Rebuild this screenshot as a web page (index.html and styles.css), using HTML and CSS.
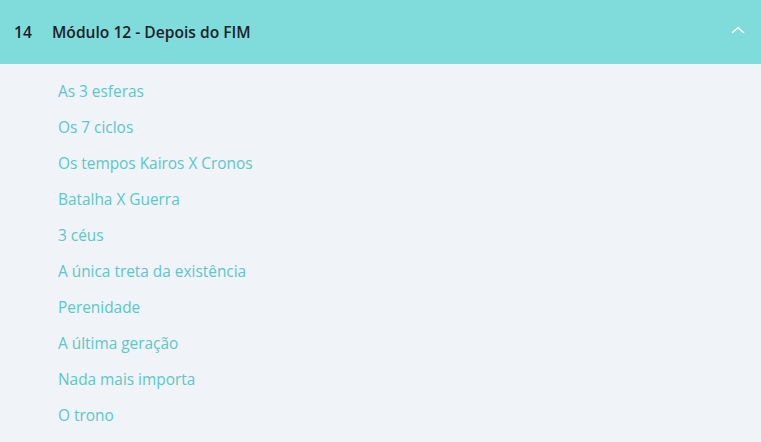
FILE: index.html
```html
<!DOCTYPE html>
<html lang="pt">
<head>
    <meta charset="UTF-8">
    <meta name="viewport" content="width=device-width, initial-scale=1.0">
    <title>Módulo 12 - Depois do FIM</title>
    <link rel="stylesheet" href="styles.css">
</head>
<body>
    <div class="module">
        <div class="module-header">
            <span class="module-num">14</span>
            <span class="module-title">Módulo 12 - Depois do FIM</span>
            <svg class="chevron" width="14" height="8" viewBox="0 0 14 8">
                <path d="M1 7 L7 1.5 L13 7" fill="none" stroke="#fff" stroke-width="1.5"/>
            </svg>
        </div>
        <ul class="lessons">
            <li>As 3 esferas</li>
            <li>Os 7 ciclos</li>
            <li>Os tempos Kairos X Cronos</li>
            <li>Batalha X Guerra</li>
            <li>3 céus</li>
            <li>A única treta da existência</li>
            <li>Perenidade</li>
            <li>A última geração</li>
            <li>Nada mais importa</li>
            <li>O trono</li>
        </ul>
    </div>
</body>
</html>
```

FILE: styles.css
```css
body {
    margin: 0;
    padding: 0;
    background-color: #f0f3f8;
    font-family: "Open Sans", Lato, sans-serif;
}

.module-header {
    display: flex;
    align-items: center;
    height: 64px;
    padding: 0 16px 0 14px;
    background-color: #80dbdb;
    color: #1e2228;
    font-size: 15.6px;
    font-weight: 600;
}

.module-num {
    width: 38px;
}

.module-title {
    flex: 1;
}

.chevron {
    margin-top: -4px;
}

.lessons {
    list-style: none;
    margin: 0;
    padding: 10px 0 0 58px;
}

.lessons li {
    height: 36px;
    line-height: 36px;
    color: #5ac8c8;
    font-size: 15.4px;
}
```
